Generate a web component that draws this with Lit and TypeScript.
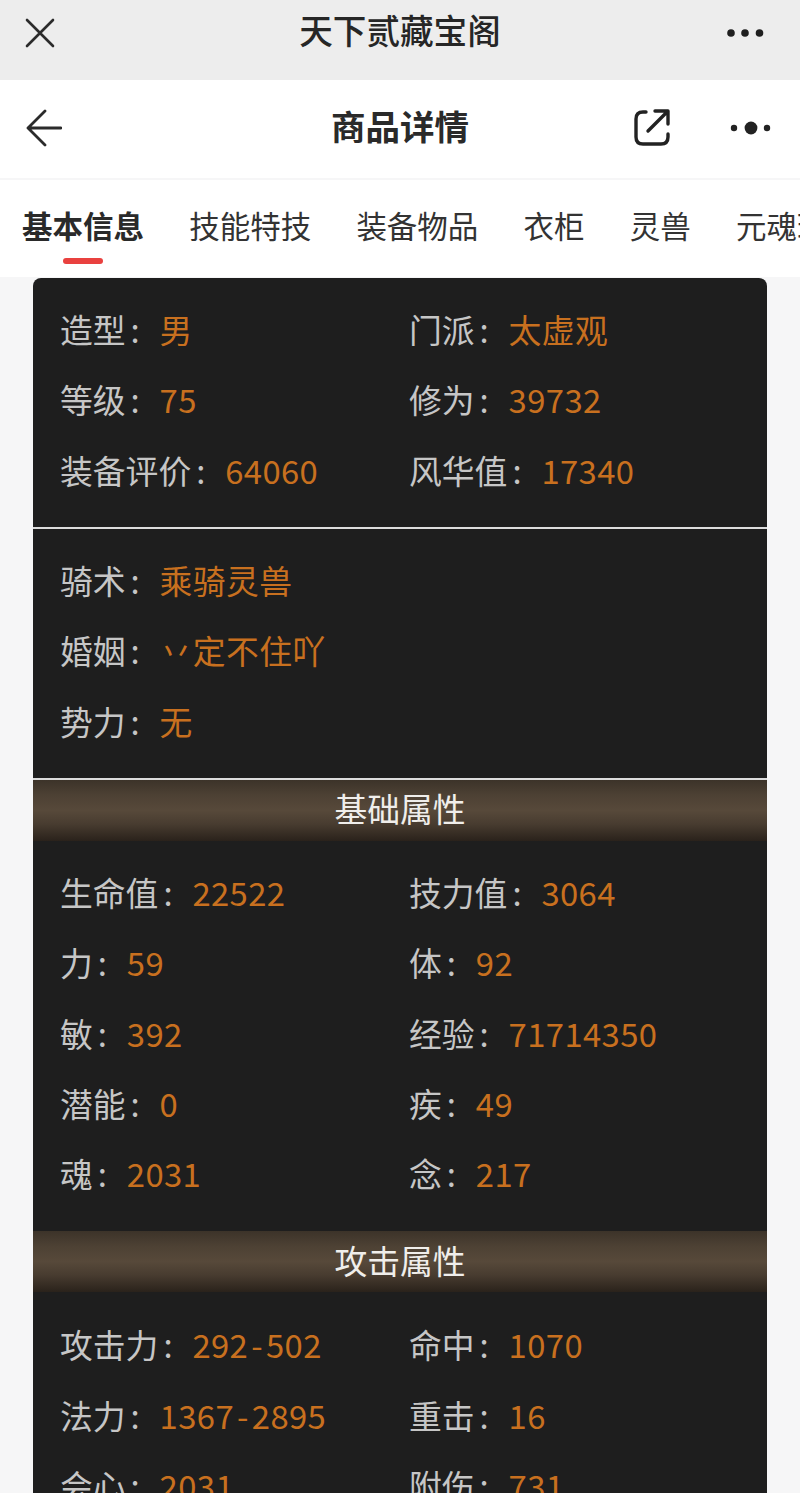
import { LitElement, html, css } from "lit";
import { customElement } from "lit/decorators.js";

type Item = [string, string];
const s1: Item[] = [["造型", "男"], ["门派", "太虚观"], ["等级", "75"], ["修为", "39732"], ["装备评价", "64060"], ["风华值", "17340"]];
const s2: Item[] = [["骑术", "乘骑灵兽"], ["婚姻", "丷定不住吖"], ["势力", "无"]];
const s3: Item[] = [["生命值", "22522"], ["技力值", "3064"], ["力", "59"], ["体", "92"], ["敏", "392"], ["经验", "71714350"], ["潜能", "0"], ["疾", "49"], ["魂", "2031"], ["念", "217"]];
const s4: Item[] = [["攻击力", "292-502"], ["命中", "1070"], ["法力", "1367-2895"], ["重击", "16"], ["会心", "2031"], ["附伤", "731"]];
const tabs = ["基本信息", "技能特技", "装备物品", "衣柜", "灵兽", "元魂珠"];

@customElement("app-root")
export class AppRoot extends LitElement {
  static styles = css`
    :host {
      display: block;
      width: 800px;
      height: 1493px;
      overflow: hidden;
      background: #f6f6f7;
      font-family: "Noto Sans CJK SC", "Liberation Sans", sans-serif;
      color: #222;
    }
    .top {
      height: 65px;
      padding-bottom: 15px;
      background: #ededed;
      display: flex;
      align-items: center;
      justify-content: space-between;
      padding-left: 25px;
      padding-right: 36px;
      position: relative;
    }
    .top-title {
      position: absolute;
      left: 0;
      right: 0;
      top: 10px;
      text-align: center;
      font-size: 33.6px;
      line-height: 40px;
      font-weight: 500;
      color: #262626;
    }
    .nav {
      height: 98px;
      background: #fff;
      display: flex;
      align-items: center;
      justify-content: space-between;
      padding: 0 28px 2px 26px;
      box-sizing: border-box;
      position: relative;
    }
    .nav-title {
      position: absolute;
      left: 0;
      right: 0;
      top: 24px;
      text-align: center;
      font-size: 34.5px;
      line-height: 42px;
      font-weight: 700;
      color: #2a2a2a;
    }
    .nav-actions {
      display: flex;
      align-items: center;
      gap: 60px;
    }
    svg { display: block; }
    .tabs {
      height: 97px;
      margin-top: 2px;
      background: #fff;
      display: flex;
      gap: 45.2px;
      padding-left: 22px;
      overflow: hidden;
      box-sizing: border-box;
    }
    .tab {
      flex: none;
      font-size: 30.5px;
      line-height: 40px;
      padding-top: 25px;
      color: #333;
      display: flex;
      flex-direction: column;
      align-items: center;
    }
    .tab.on { font-weight: 700; color: #2a2a2a; }
    .mark {
      width: 40px;
      height: 6px;
      margin-top: 13px;
      border-radius: 3px;
      background: #e9413f;
    }
    .card {
      margin: 1px 33px 0;
      background: #1e1e1e;
      border-radius: 8px 8px 0 0;
      overflow: hidden;
    }
    .sec {
      display: grid;
      grid-template-columns: 349px 1fr;
      grid-auto-rows: 70.3px;
      padding: 18px 0 20px 27px;
    }
    .sec.one { grid-template-columns: 1fr; padding-bottom: 20px; }
    .sec.base { padding-bottom: 21px; }
    .sec.tail { padding-top: 19px; }
    .rule { height: 2px; background: #dcdcdc; }
    .row {
      display: flex;
      align-items: center;
      box-sizing: border-box;
      padding-bottom: 4px;
      font-size: 32.8px;
      line-height: 40px;
      white-space: nowrap;
    }
    .k { color: #c6c6c6; }
    .c { color: #c6c6c6; width: 34px; padding-left: 5px; box-sizing: border-box; flex: none; }
    .v { color: #c8701f; letter-spacing: 0.4px; }
    .dash { margin: 0 3px; }
    .head {
      height: 61px;
      box-sizing: border-box;
      padding-bottom: 4px;
      display: flex;
      align-items: center;
      justify-content: center;
      font-size: 32.8px;
      line-height: 40px;
      color: #f0eeeb;
      background: linear-gradient(180deg, #3c3329 0%, #4d4134 25%, #57493a 50%, #483c30 72%, #2a221b 100%);
    }
  `;

  private val(v: string) {
    const i = v.indexOf("-");
    if (i < 0) return v;
    return html`${v.slice(0, i)}<span class="dash">-</span>${v.slice(i + 1)}`;
  }

  private sec(items: Item[], cls = "") {
    return html`<div class="sec ${cls}">
      ${items.map(
        ([k, v]) => html`<div class="row"><span class="k">${k}</span><span class="c">:</span><span class="v">${this.val(v)}</span></div>`
      )}
    </div>`;
  }

  render() {
    return html`
      <div class="top">
        <svg width="30" height="30" viewBox="0 0 30 30" fill="none" stroke="#2b2b2b" stroke-width="2.6" stroke-linecap="round">
          <path d="M2 2 L28 28 M28 2 L2 28" />
        </svg>
        <div class="top-title">天下贰藏宝阁</div>
        <svg width="38" height="10" viewBox="0 0 38 10" fill="#1f1f1f">
          <circle cx="5" cy="5" r="3.8" /><circle cx="19" cy="5" r="3.8" /><circle cx="33.5" cy="5" r="3.8" />
        </svg>
      </div>
      <div class="nav">
        <svg width="36" height="38" viewBox="0 0 36 38" fill="none" stroke="#2b2b2b" stroke-width="2.8" stroke-linecap="round" stroke-linejoin="round">
          <path d="M19 2 L2 19 L19 36 M2 19 H35" />
        </svg>
        <div class="nav-title">商品详情</div>
        <div class="nav-actions">
          <svg width="36" height="38" viewBox="0 0 36 38" fill="none" stroke="#222" stroke-width="3.4" stroke-linecap="round" stroke-linejoin="round">
            <path d="M12 3 H9 Q2 3 2 10 V28 Q2 35 9 35 H27 Q34 35 34 28 V25" />
            <path d="M14 22 L33 3 M21 2 H34 V15" />
          </svg>
          <svg width="42" height="14" viewBox="0 0 42 14" fill="#222">
            <circle cx="4" cy="7" r="3.2" /><circle cx="21" cy="7" r="6.4" /><circle cx="37" cy="7" r="3.2" />
          </svg>
        </div>
      </div>
      <div class="tabs">
        ${tabs.map(
          (t, i) => html`<div class="tab ${i === 0 ? "on" : ""}">
            <span>${t}</span>${i === 0 ? html`<div class="mark"></div>` : ""}
          </div>`
        )}
      </div>
      <div class="card">
        ${this.sec(s1)}
        <div class="rule"></div>
        ${this.sec(s2, "one")}
        <div class="rule"></div>
        <div class="head">基础属性</div>
        ${this.sec(s3, "base")}
        <div class="head">攻击属性</div>
        ${this.sec(s4, "tail")}
      </div>
    `;
  }
}
